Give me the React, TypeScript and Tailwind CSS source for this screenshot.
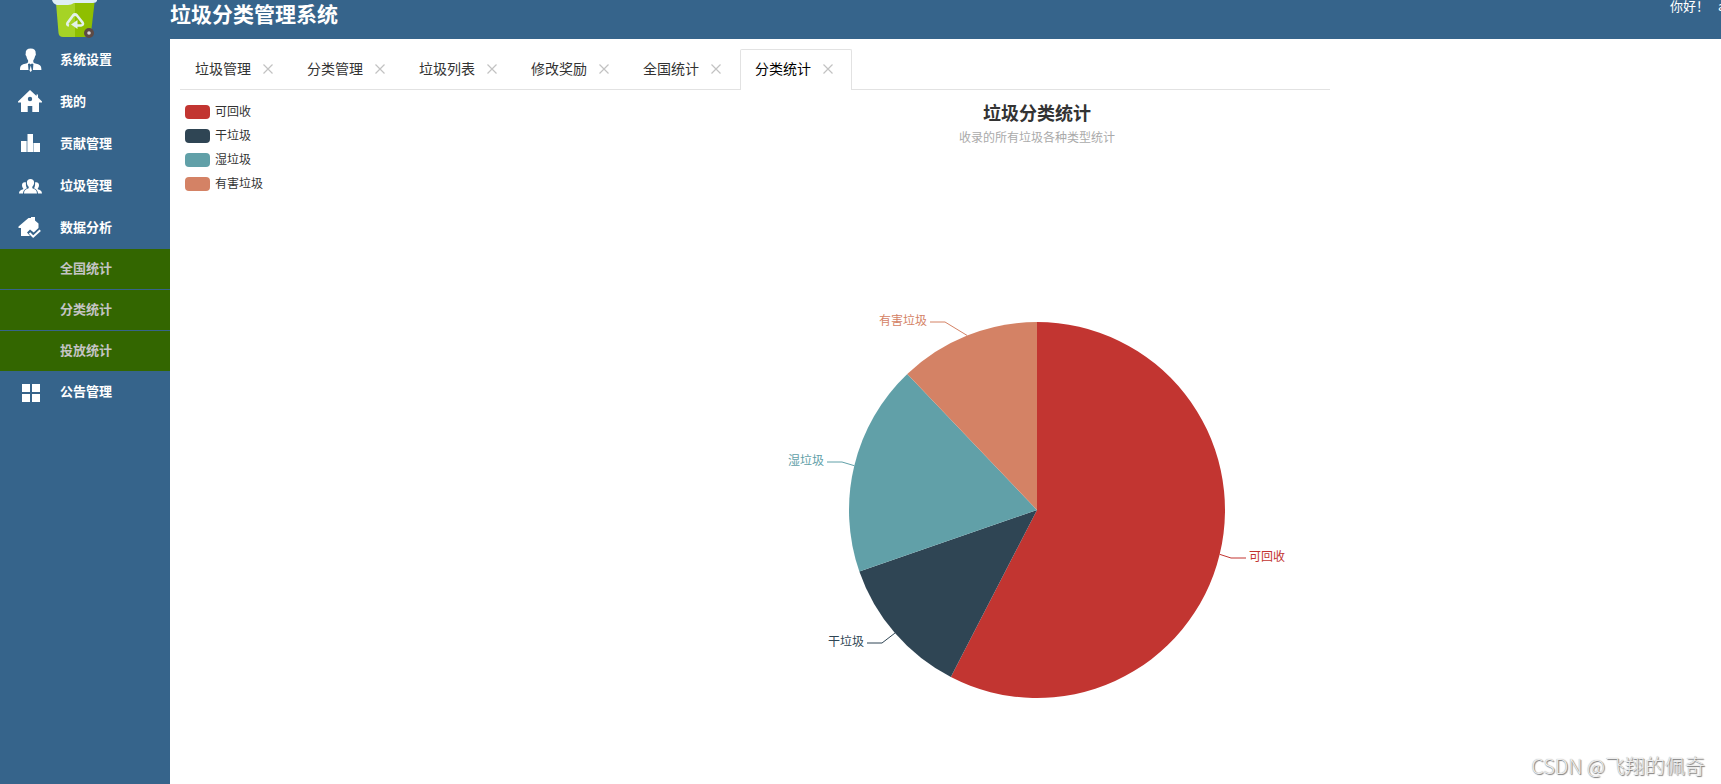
import React, { useState } from "react";

interface MenuItem {
  name: string;
  icon: React.ReactNode;
  children?: string[];
}

interface Slice {
  name: string;
  value: number;
  color: string;
  // codo de la línea guía, relativo al centro
  elbow: [number, number];
}

const menu: MenuItem[] = [
  {
    name: "系统设置",
    icon: (
      <path d="M12.700 .5c-3.500 0-5.200 1.800-5 5-.4.800-.1 1.800.6 2.500.4 2 1 3.200 1.800 4.200v2c-1 1.500-4.700 1.500-6.600 3-1.100.8-1.500 2.300-1.500 4.800h8.500L10 16l1.500-.5 1.200 1 1.200-1 1.500.5-.5 6h8.500c0-2.500-.4-4-1.500-4.800-1.900-1.500-5.600-1.500-6.600-3v-2c.8-1 1.400-2.200 1.800-4.200.7-.7 1-1.700.6-2.500.2-3.200-1.500-5-5-5zM12.700 17.500l-1.200 5 1.200 1.500 1.200-1.500z" />
    ),
  },
  {
    name: "我的",
    icon: (
      <path fillRule="evenodd" d="M12 0l6.500 6V4.500H20v3l4 4V12.500h-3V22h-6.700v-6H9.700v6H3v-9.500H0v-1zM12 6.800a2.200 2.200 0 1 0 0 4.400 2.200 2.200 0 0 0 0-4.400z" />
    ),
  },
  {
    name: "贡献管理",
    icon: (
      <>
        <path d="M3 9h5.500v11H3zM9.500 2H15v18H9.500zM16 11h6v9h-6z" />
        <path d="M8.500 9h1v11h-1zM15 11h1v9h-1z" opacity=".6" />
      </>
    ),
  },
  {
    name: "垃圾管理",
    icon: (
      <>
        <path d="M12.500 5c-2.200 0-3.600 1.200-3.600 3.500 0 2 .8 3.500 1.800 4.300v1.400c-2.200.9-4.500 1.200-4.700 5.300h13c-.2-4.100-2.500-4.400-4.700-5.300v-1.400c1-.8 1.800-2.300 1.800-4.300C16.100 6.200 14.700 5 12.500 5z" />
        <path d="M8 8.500C5.700 7.700 4 9 4 11c0 1.600.5 2.600 1.200 3.200v1C3.300 16 1.200 16.200 1 19.500h4c.2-2.800 1.600-4.200 4-5.200C8 12.500 7.700 10.500 8 8.500zM17 8.500c2.300-.8 4 .5 4 2.500 0 1.600-.5 2.600-1.200 3.200v1c1.900.8 4 1 4.200 4.300h-4c-.2-2.800-1.600-4.200-4-5.200 1-1.800 1.300-3.800 1-5.800z" />
      </>
    ),
  },
  {
    name: "数据分析",
    icon: (
      <>
        <path d="M10.500 2H13V1h4v3.500L20.500 7.500V12l-4.800 4.500-3.700-3-3 3 3 3.500H3V12H.5v-1.500z" />
        <path d="M11.500 17l3.700 3.700 7-6.500" fill="none" stroke="currentColor" strokeWidth="2" />
      </>
    ),
    children: ["全国统计", "分类统计", "投放统计"],
  },
  {
    name: "公告管理",
    icon: <path d="M4 4h8v8H4zM14 4h8v8h-8zM4 14h8v8H4zM14 14h8v8h-8z" />,
  },
];

const slices: Slice[] = [
  { name: "可回收", value: 19, color: "#c23531", elbow: [194, 48] },
  { name: "干垃圾", value: 4, color: "#2f4554", elbow: [-155, 133] },
  { name: "湿垃圾", value: 6, color: "#61a0a8", elbow: [-195, -48] },
  { name: "有害垃圾", value: 4, color: "#d48265", elbow: [-92, -188] },
];

const RADIUS = 188;

const Logo = () => (
  <svg viewBox="0 0 46 38" className="ml-[52px] block h-[38px] w-[46px]" aria-hidden="true">
    <path d="M4 3h20v34H11q-4 0-4.500-4z" fill="#a6d325" />
    <path d="M23 3h19.500L39 33q-.5 4-4 4H23z" fill="#8fbf00" />
    <path d="M0 0h45v1q-1 2-4 2H22q-3 2-6 2H5Q1 4 0 0z" fill="#dfeef5" />
    <path d="M17 25.500q-2.500-.5-1.500-2.500L21 15.500q2-2 4 0l5.500 7q1.500 2.500-1.500 3h-4" fill="none" stroke="#e3f1ea" strokeWidth="2.600" />
    <path d="M25.500 20v9L19 24.500z" fill="#e3f1ea" />
    <circle cx="37" cy="33" r="5" fill="#5d4a45" />
    <circle cx="37" cy="33" r="1.800" fill="#d9d4d2" />
  </svg>
);

const Sidebar = () => (
  <aside className="w-[170px] shrink-0 text-[13px] font-bold text-white">
    <div className="h-[39px]">
      <Logo />
    </div>
    <ul>
      {menu.map((item) => (
        <li key={item.name}>
          <a href="#" className="flex h-[42px] items-center gap-[18px] pl-[18px]">
            <svg viewBox="0 0 24 24" className="h-6 w-6 fill-current" aria-hidden="true">
              {item.icon}
            </svg>
            <span className="pb-0.5">{item.name}</span>
          </a>
          {item.children && (
            <ul className="divide-y divide-[#36648b] bg-[#336600] text-[#c4c4c4]">
              {item.children.map((child) => (
                <li key={child}>
                  <a href="#" className="flex h-10 items-center pb-0.5 pl-[60px]">
                    {child}
                  </a>
                </li>
              ))}
            </ul>
          )}
        </li>
      ))}
    </ul>
  </aside>
);

const Tabs = () => {
  const [tabs, setTabs] = useState(["垃圾管理", "分类管理", "垃圾列表", "修改奖励", "全国统计", "分类统计"]);
  const [active, setActive] = useState("分类统计");

  return (
    <ul className="mr-[391px] flex border-b border-[#e2e2e2] text-sm">
      {tabs.map((tab) => (
        <li
          key={tab}
          className={
            tab === active
              ? "-mb-px flex h-[41px] items-center rounded-t-xs border border-b-0 border-[#e2e2e2] bg-white px-[14px] pb-0.5 text-black"
              : "flex h-10 items-center px-[15px] text-[#333]"
          }
        >
          <button type="button" className="pb-0.5" onClick={() => setActive(tab)}>
            {tab}
          </button>
          <button
            type="button"
            aria-label={"关闭" + tab}
            className="ml-2 flex h-[18px] w-[18px] items-center justify-center text-[#c2c2c2]"
            onClick={() => setTabs(tabs.filter((t) => t !== tab))}
          >
            <svg viewBox="0 0 10 10" className="h-[10px] w-[10px]" aria-hidden="true">
              <path d="M.5 .5l9 9M9.500 .5l-9 9" stroke="currentColor" strokeWidth="1.200" />
            </svg>
          </button>
        </li>
      ))}
    </ul>
  );
};

const point = (fraction: number) => {
  const angle = fraction * Math.PI * 2;
  return [RADIUS * Math.sin(angle), -RADIUS * Math.cos(angle)];
};

const PieChart = () => {
  const total = slices.reduce((sum, s) => sum + s.value, 0);
  let acc = 0;

  return (
    <svg viewBox="-260 -208 520 416" className="h-[416px] w-[520px]" role="img" aria-label="垃圾分类统计">
      {slices.map((s) => {
        const start = acc / total;
        acc += s.value;
        const end = acc / total;
        const [x1, y1] = point(start);
        const [x2, y2] = point(end);
        const [mx, my] = point((start + end) / 2);
        const side = s.elbow[0] > 0 ? 1 : -1;
        const large = end - start > 0.5 ? 1 : 0;
        return (
          <g key={s.name} fill={s.color}>
            <path d={`M0 0L${x1} ${y1}A${RADIUS} ${RADIUS} 0 ${large} 1 ${x2} ${y2}Z`} />
            <polyline
              points={`${mx},${my} ${s.elbow[0]},${s.elbow[1]} ${s.elbow[0] + 15 * side},${s.elbow[1]}`}
              fill="none"
              stroke={s.color}
            />
            <text
              x={s.elbow[0] + 18 * side}
              y={s.elbow[1] + 3}
              textAnchor={side > 0 ? "start" : "end"}
              className="text-xs"
            >
              {s.name}
            </text>
          </g>
        );
      })}
    </svg>
  );
};

const App = () => {
  return (
    <div className="relative flex min-h-screen overflow-hidden bg-[#36648b] font-['Noto_Sans_CJK_SC',sans-serif]">
      <Sidebar />
      <div className="flex min-w-0 flex-1 flex-col">
        <header className="flex h-[39px] justify-between text-white">
          <h1 className="text-[21px] leading-[26px] font-bold">垃圾分类管理系统</h1>
          <div className="flex w-[51px] gap-[9px] text-[13px] leading-3 whitespace-nowrap">
            <span>你好！</span>
            <span>a</span>
          </div>
        </header>

        <main className="flex-1 bg-white pt-[10px] pl-[10px]">
          <Tabs />
          <div className="flex">
            <ul className="w-[173px] shrink-0 pt-[10px] pl-[5px] text-xs text-[#333]">
              {slices.map((s) => (
                <li key={s.name} className="flex h-6 items-center gap-[5px]">
                  <span className="h-[14px] w-[25px] rounded-sm" style={{ backgroundColor: s.color }} />
                  <span className="pb-[3px]">{s.name}</span>
                </li>
              ))}
            </ul>
            <div className="flex flex-1 flex-col items-center pt-[10px]">
              <h2 className="text-lg leading-6 font-bold text-[#333]">垃圾分类统计</h2>
              <p className="mb-[152px] text-xs leading-[26px] text-[#aaa]">收录的所有垃圾各种类型统计</p>
              <PieChart />
            </div>
          </div>
        </main>
      </div>

      <div className="absolute right-4 bottom-1 text-xl font-light text-[#eee] [text-shadow:1px_1px_1px_#777,0_0_1px_#999]">
        CSDN @飞翔的佩奇
      </div>
    </div>
  );
};

export default App;
